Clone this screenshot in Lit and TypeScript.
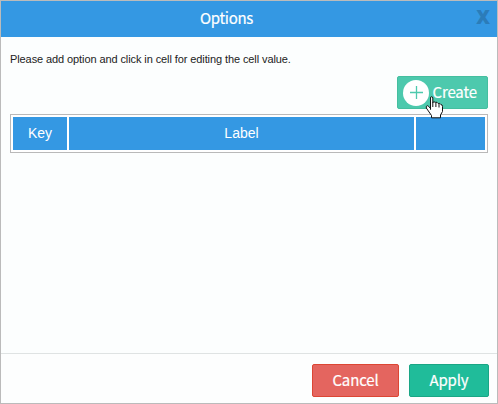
import { LitElement, html, css } from "lit";
import { customElement } from "lit/decorators.js";

@customElement("app-root")
class AppRoot extends LitElement {
  static styles = css`
    :host {
      display: block;
      height: 404px;
    }
    * {
      box-sizing: border-box;
    }
    .dialog {
      position: relative;
      display: flex;
      flex-direction: column;
      width: 498px;
      height: 404px;
      border: 1px solid #bbb;
      background: #fcfefe;
      font-family: "Liberation Sans", Arial, sans-serif;
    }
    .header {
      display: grid;
      grid-template-columns: 45px 1fr 45px;
      height: 36px;
      flex: none;
      background: #3498e3;
      color: #fff;
    }
    .title {
      grid-column: 2;
      text-align: center;
      font: 400 15px/34px "Noto Sans CJK SC", sans-serif;
      letter-spacing: -0.3px;
      -webkit-text-stroke: 0.2px #fff;
      padding-right: 45px;
    }
    .close {
      grid-column: 3;
      display: flex;
      justify-content: flex-end;
      padding: 9px 7px 0 0;
      margin: 0;
      border: 0;
      background: none;
      font: 800 19px/15px "Open Sans", sans-serif;
      color: #2b7cb9;
    }
    .body {
      flex: 1;
      padding: 14px 9px 0;
      display: flex;
      flex-direction: column;
    }
    .hint {
      margin: 0;
      height: 25px;
      font-size: 11px;
      line-height: 16px;
      letter-spacing: -0.095px;
      color: #222;
      white-space: nowrap;
    }
    .btn {
      display: flex;
      align-items: center;
      justify-content: center;
      height: 33px;
      margin: 0;
      padding: 0 0 1px;
      border: 1px solid;
      border-radius: 2px;
      color: #fff;
      font: 400 15px/28px "Noto Sans CJK SC", sans-serif;
      letter-spacing: -0.15px;
      -webkit-text-stroke: 0.2px #fff;
    }
    .create {
      align-self: flex-end;
      width: 91px;
      justify-content: flex-start;
      padding: 0 0 0 5px;
      gap: 3.5px;
      background: #4dc9ad;
      border-color: #45bf9f;
    }
    .create span {
      padding-bottom: 1px;
    }
    .plus {
      flex: none;
      width: 26px;
      height: 26px;
    }
    .grid {
      display: grid;
      grid-template-columns: 54px 345px 69px;
      gap: 2px;
      width: 478px;
      height: 39px;
      margin-top: 5px;
      padding: 2px;
      border: 1px solid #b9b9b9;
      background: #fff;
    }
    .cell {
      background: #3498e3;
      color: #fff;
      text-align: center;
      font-size: 14px;
      line-height: 33px;
      height: 33px;
    }
    .footer {
      flex: none;
      display: flex;
      justify-content: flex-end;
      gap: 10px;
      height: 50px;
      padding: 10px 8px 0 0;
      border-top: 1px solid #dfe3e3;
      background: #fdfefe;
    }
    .cancel {
      width: 87px;
      background: #e4655f;
      border-color: #dc4634;
    }
    .apply {
      width: 80px;
      background: #20bc9a;
      border-color: #1aa685;
    }
    .cursor {
      position: absolute;
      left: 424px;
      top: 95px;
      width: 19px;
      height: 23px;
    }
  `;

  render() {
    return html`
      <div class="dialog">
        <div class="header">
          <div class="title">Options</div>
          <button class="close">X</button>
        </div>
        <div class="body">
          <p class="hint">Please add option and click in cell for editing the cell value.</p>
          <button class="btn create">
            <svg class="plus" viewBox="0 0 26 26">
              <circle cx="13" cy="13" r="13" fill="#fff" />
              <path d="M7 12.5H20M13.5 6V19" stroke="#4dc9ad" stroke-width="1.3" />
            </svg>
            <span>Create</span>
          </button>
          <div class="grid">
            <div class="cell">Key</div>
            <div class="cell">Label</div>
            <div class="cell"></div>
          </div>
        </div>
        <div class="footer">
          <button class="btn cancel">Cancel</button>
          <button class="btn apply">Apply</button>
        </div>
        <svg class="cursor" viewBox="0 0 19 23">
          <path
            d="M5.5 13.5V2Q5.5.7 6.6.7T7.8 2V6.5Q8.8 5.2 10.4 6.3Q12.2 5.7 13.2 7.5Q15 6.8 15.8 8.5Q17.5 8.5 17.5 10.5V15.5L15.5 19V21.8H6.5V19.5L1.3 12Q.8 9.8 2.6 9.7Q3.6 10 5.5 12.5Z"
            fill="#fff" stroke="#111" stroke-linejoin="round"
          />
          <path d="M7.8 6V11M10.9 6.6V11M14 8V11.5" fill="none" stroke="#111" />
        </svg>
      </div>
    `;
  }
}
